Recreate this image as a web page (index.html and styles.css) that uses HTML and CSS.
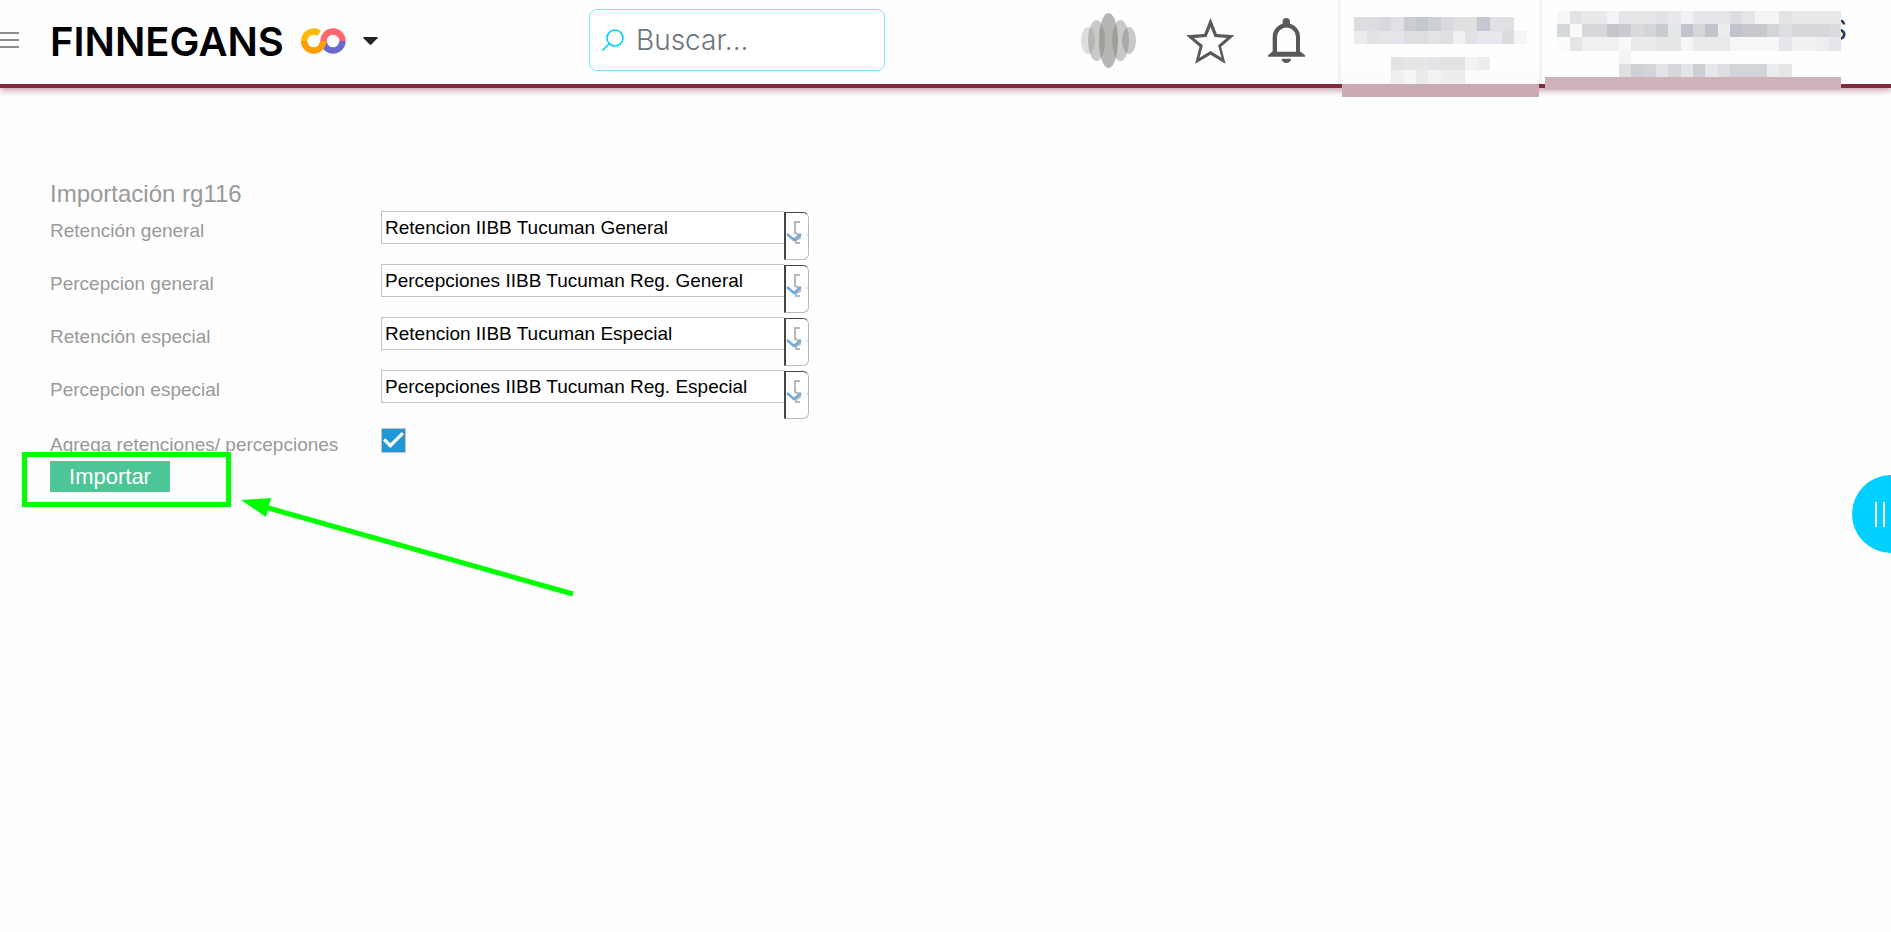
FILE: index.html
```html
<!DOCTYPE html>
<html lang="es">
<head>
    <meta charset="UTF-8">
    <meta name="viewport" content="width=device-width, initial-scale=1">
    <title>Importación rg116</title>
    <link rel="stylesheet" href="styles.css">
</head>
<body>

<header class="header">
    <button type="button" class="menu" aria-label="Menu"><span></span><span></span><span></span></button>

    <button type="button" class="brand">
        <span class="brand-name">FINNEGANS</span>
        <svg class="brand-logo" viewBox="903 84 135 78" fill="none" stroke-width="19">
            <path stroke="#6b69cd" d="M970.5 123a28.5 28.5 0 0 0 57 0"/>
            <path stroke="#ff6670" d="M970.5 123a28.5 28.5 0 0 1 57 0"/>
            <path stroke="#ffb900" d="M912.5 123a28.5 28.5 0 0 1 45-23"/>
            <path stroke="#ff9c00" d="M912.5 123a28.5 28.5 0 0 0 57 0"/>
        </svg>
        <svg class="brand-caret" viewBox="0 0 15 8"><path fill="#212529" d="M1 0h13q1 .5.5 1.2L8.300 7.500q-.8.700-1.600 0L.5 1.200Q0 .5 1 0z"/></svg>
    </button>

    <form class="search">
        <svg viewBox="0 0 22 22" fill="none" stroke="#00cfff" stroke-width="1.600">
            <circle cx="13" cy="9" r="8"/>
            <path d="M7.500 14.500L.5 21.500"/>
        </svg>
        <input type="text" placeholder="Buscar..." aria-label="Buscar">
    </form>

    <div class="tools">
        <button type="button" class="tool voice" aria-label="Asistente">
            <svg viewBox="0 0 55 55" fill="#7b7a77">
                <ellipse cx="7" cy="27.500" rx="7" ry="13.500" opacity=".25"/>
                <ellipse cx="48" cy="27.500" rx="7" ry="13.500" opacity=".4"/>
                <ellipse cx="15.500" cy="27.500" rx="8.500" ry="20.500" opacity=".4"/>
                <ellipse cx="39.500" cy="27.500" rx="8.500" ry="20.500" opacity=".4"/>
                <ellipse cx="27.500" cy="27.500" rx="9.500" ry="27.500" opacity=".55"/>
            </svg>
        </button>
        <button type="button" class="tool star" aria-label="Favoritos">
            <svg viewBox="378 52 146 138"><path fill="#595959" fill-rule="evenodd" d="M451 52L470 100L523 104L483 138L496 189L451 162L405 189L418 138L378 104L432 100ZM451 79L439 109L401 112L428 134L418 171L451 151L484 171L474 134L500 112L463 109Z"/></svg>
        </button>
        <button type="button" class="tool bell" aria-label="Notificaciones">
            <svg viewBox="624 58 111 135" fill="#595959">
                <path d="M668 80V69a11 11 0 0 1 22 0v11z"/>
                <path fill-rule="evenodd" d="M638 158V115a41 41 0 0 1 82 0v43l15 12v4H624v-4zM651 159h57V115a28.500 28.500 0 0 0-57 0z"/>
                <path d="M665 180h28a14 13 0 0 1-28 0z"/>
            </svg>
        </button>
    </div>

    <div class="user company">
        <svg width="197" height="97" viewBox="0 0 197 97" shape-rendering="crispEdges">
            <path fill="#fcfcfc" d="M0 70h197v14H0z"/>
            <path fill="#dcdde1" d="M12 17h25v14H12z"/>
            <path fill="#d8d9dc" d="M37 17h12v14H37z"/>
            <path fill="#e0e1e5" d="M49 17h13v14H49z"/>
            <path fill="#cbccd1" d="M62 17h12v14H62z"/>
            <path fill="#c5c7cf" d="M74 17h12v14H74z"/>
            <path fill="#cccfd4" d="M86 17h13v14H86z"/>
            <path fill="#d9dadd" d="M99 17h12v14H99z"/>
            <path fill="#dfe0e2" d="M111 17h24v14h-24z"/>
            <path fill="#c6c8d1" d="M135 17h13v14h-13z"/>
            <path fill="#e0e1e4" d="M148 17h24v14h-24z"/>
            <path fill="#ebecee" d="M12 31h13v13H12z"/>
            <path fill="#e1e2e6" d="M25 31h12v13H25z"/>
            <path fill="#e4e5e6" d="M37 31h12v13H37z"/>
            <path fill="#e4e5ea" d="M49 31h13v13H49z"/>
            <path fill="#dddee2" d="M62 31h24v13H62z"/>
            <path fill="#e2e3e4" d="M86 31h13v13H86z"/>
            <path fill="#dddfe3" d="M99 31h12v13H99z"/>
            <path fill="#eff0f2" d="M111 31h12v13h-12z"/>
            <path fill="#e2e3e7" d="M123 31h12v13h-12z"/>
            <path fill="#e7e8ed" d="M135 31h25v13h-25z"/>
            <path fill="#dcdce0" d="M160 31h12v13h-12z"/>
            <path fill="#f4f5f7" d="M172 31h13v13h-13z"/>
            <path fill="#e2e3e5" d="M49 57h13v13H49z"/>
            <path fill="#e5e6e8" d="M62 57h24v13H62z"/>
            <path fill="#e3e4e9" d="M86 57h13v13H86z"/>
            <path fill="#e2e3e4" d="M99 57h24v13H99z"/>
            <path fill="#f1f2f4" d="M123 57h12v13h-12z"/>
            <path fill="#ecedef" d="M135 57h13v13h-13z"/>
            <path fill="#efefef" d="M49 70h13v14H49z"/>
            <path fill="#f5f5f5" d="M62 70h12v14H62z"/>
            <path fill="#e9eaeb" d="M74 70h12v14H74z"/>
            <path fill="#f2f2f2" d="M86 70h13v14H86z"/>
            <path fill="#ededed" d="M99 70h24v14H99z"/>
            <path fill="#cbaab1" d="M0 84h197v13H0z"/>
        </svg>
    </div>

    <div class="user person">
        <span class="person-name">S</span>
        <svg width="296" height="90" viewBox="0 0 296 90" shape-rendering="crispEdges">
            <path fill="#f6f7f6" d="M12 11h13v13H12z"/>
            <path fill="#e1e2e6" d="M25 11h12v13H25z"/>
            <path fill="#e8e9ea" d="M37 11h25v13H37z"/>
            <path fill="#f3f4f7" d="M62 11h12v13H62z"/>
            <path fill="#e5e6e7" d="M74 11h37v13H74z"/>
            <path fill="#e1e2e5" d="M111 11h12v13h-12z"/>
            <path fill="#e7e8ea" d="M123 11h13v13h-13z"/>
            <path fill="#f1f2f5" d="M136 11h12v13h-12z"/>
            <path fill="#e5e6ea" d="M148 11h37v13h-37z"/>
            <path fill="#dddee2" d="M185 11h12v13h-12z"/>
            <path fill="#e5e6e8" d="M197 11h13v13h-13z"/>
            <path fill="#f3f5f4" d="M210 11h24v13h-24z"/>
            <path fill="#e2e3e4" d="M234 11h13v13h-13z"/>
            <path fill="#e8e9ea" d="M247 11h49v13h-49z"/>

            <path fill="#d5d9dc" d="M12 24h13v13H12z"/>
            <path fill="#fafafa" d="M25 24h12v13H25z"/>
            <path fill="#d7d8db" d="M37 24h25v13H37z"/>
            <path fill="#c4c6cc" d="M62 24h12v13H62z"/>
            <path fill="#cacbd0" d="M74 24h12v13H74z"/>
            <path fill="#d9dade" d="M86 24h13v13H86z"/>
            <path fill="#d4d5d9" d="M99 24h12v13H99z"/>
            <path fill="#c9cccf" d="M111 24h12v13h-12z"/>
            <path fill="#e6e7e9" d="M123 24h13v13h-13z"/>
            <path fill="#c1c3cd" d="M136 24h12v13h-12z"/>
            <path fill="#d6d7db" d="M148 24h12v13h-12z"/>
            <path fill="#c1c3cd" d="M160 24h13v13h-13z"/>
            <path fill="#ebecee" d="M173 24h12v13h-12z"/>
            <path fill="#c1c3cd" d="M185 24h12v13h-12z"/>
            <path fill="#c6c8cc" d="M197 24h25v13h-25z"/>
            <path fill="#d1d4d9" d="M222 24h12v13h-12z"/>
            <path fill="#dddee2" d="M234 24h13v13h-13z"/>
            <path fill="#d6d7da" d="M247 24h37v13h-37z"/>
            <path fill="#dbdce0" d="M284 24h12v13h-12z"/>

            <path fill="#fafcfb" d="M12 37h13v14H12z"/>
            <path fill="#e4e6e6" d="M25 37h12v14H25z"/>
            <path fill="#eff0f2" d="M37 37h37v14H37z"/>
            <path fill="#f7f9f7" d="M74 37h12v14H74z"/>
            <path fill="#eaebec" d="M86 37h25v14H86z"/>
            <path fill="#e6e8e8" d="M111 37h25v14h-25z"/>
            <path fill="#f5f7f5" d="M136 37h12v14h-12z"/>
            <path fill="#e8eaeb" d="M148 37h37v14h-37z"/>
            <path fill="#f6f7f7" d="M185 37h49v14h-49z"/>
            <path fill="#e6e7ea" d="M234 37h13v14h-13z"/>
            <path fill="#f1f1f2" d="M247 37h24v14h-24z"/>
            <path fill="#eeeef0" d="M271 37h13v14h-13z"/>
            <path fill="#e5e6ea" d="M284 37h12v14h-12z"/>

            <path fill="#f3f4f6" d="M74 51h12v13H74z"/>
            <path fill="#dfe0e4" d="M74 64h12v13H74z"/>
            <path fill="#cdd0d5" d="M86 64h13v13H86z"/>
            <path fill="#d2d4d9" d="M99 64h12v13H99z"/>
            <path fill="#e3e4e7" d="M111 64h12v13h-12z"/>
            <path fill="#d6d7da" d="M123 64h13v13h-13z"/>
            <path fill="#e3e4e8" d="M136 64h12v13h-12z"/>
            <path fill="#cccfd5" d="M148 64h12v13h-12z"/>
            <path fill="#e6e7ea" d="M160 64h13v13h-13z"/>
            <path fill="#dddee2" d="M173 64h12v13h-12z"/>
            <path fill="#d1d4d9" d="M185 64h37v13h-37z"/>
            <path fill="#ebecee" d="M222 64h12v13h-12z"/>
            <path fill="#e5e6e7" d="M234 64h13v13h-13z"/>
            <path fill="#cfb2ba" d="M0 77h296v13H0z"/>
        </svg>
    </div>
</header>

<!-- arrow and chevron shared by the combo buttons -->
<svg class="defs" aria-hidden="true">
    <symbol id="combo" viewBox="0 0 22 26">
        <path fill="none" stroke="#b8b8b8" stroke-width="2" d="M14 2H9v11l5 2v3l-4 2v3h4"/>
        <path fill="none" stroke="#74a9dc" stroke-width="2.500" d="M1 14l7 6 7-6"/>
        <path stroke="#a9cdf0" d="M21 14v2"/>
    </symbol>
</svg>

<main class="content">
    <h1>Importación rg116</h1>
    <form>
        <div class="row">
            <label for="retGeneral">Retención general</label>
            <div class="combo">
                <input type="text" id="retGeneral" value="Retencion IIBB Tucuman General">
                <button type="button" aria-label="Abrir lista"><svg><use href="#combo"/></svg></button>
            </div>
        </div>
        <div class="row">
            <label for="perGeneral">Percepcion general</label>
            <div class="combo">
                <input type="text" id="perGeneral" value="Percepciones IIBB Tucuman Reg. General">
                <button type="button" aria-label="Abrir lista"><svg><use href="#combo"/></svg></button>
            </div>
        </div>
        <div class="row">
            <label for="retEspecial">Retención especial</label>
            <div class="combo">
                <input type="text" id="retEspecial" value="Retencion IIBB Tucuman Especial">
                <button type="button" aria-label="Abrir lista"><svg><use href="#combo"/></svg></button>
            </div>
        </div>
        <div class="row">
            <label for="perEspecial">Percepcion especial</label>
            <div class="combo">
                <input type="text" id="perEspecial" value="Percepciones IIBB Tucuman Reg. Especial">
                <button type="button" aria-label="Abrir lista"><svg><use href="#combo"/></svg></button>
            </div>
        </div>
        <div class="row check-row">
            <label for="agrega">Agrega retenciones/ percepciones</label>
            <span class="check">
                <input type="checkbox" id="agrega" checked>
                <svg viewBox="0 0 24 24"><path fill="none" stroke="#fff" stroke-width="3" d="M3 11l6 6L21 5"/></svg>
            </span>
        </div>
        <div class="actions">
            <button type="button" class="import">Importar</button>
            <span class="highlight"></span>
            <svg class="arrow" viewBox="0 0 334 98" fill="#00ff00">
                <path d="M0 1L30 -1L25 18z"/>
                <path stroke="#00ff00" stroke-width="5" d="M24 8L332 95"/>
            </svg>
        </div>
    </form>
</main>

<button type="button" class="side-tab" aria-label="Panel"><span></span><span></span></button>

</body>
</html>
```
FILE: styles.css
```css
* {
    box-sizing: border-box;
}
body {
    margin: 0;
    min-height: 100vh;
    background-color: #fefefe;
    font-family: "Liberation Sans", Arial, Helvetica, sans-serif;
    font-size: 19px;
}
button {
    border: 0;
    padding: 0;
    background: none;
    font-family: inherit;
    cursor: pointer;
}
svg {
    display: block;
}
.defs {
    position: absolute;
    width: 0;
    height: 0;
}

/* top bar */
.header {
    display: flex;
    align-items: flex-start;
    height: 88px;
    padding-right: 46px;
    border-bottom: 4px solid #7f2c40;
    box-shadow: 0 3px 6px rgba(127, 44, 64, 0.4);
    background-color: #fefefe;
}
.menu {
    display: flex;
    flex: none;
    flex-direction: column;
    gap: 5px;
    width: 19px;
    padding-top: 32px;
}
.menu span {
    width: 100%;
    height: 2px;
    background-color: #8c8c8c;
}
.brand {
    display: flex;
    flex: none;
    align-items: center;
    height: 82px;
    margin-left: 31px;
}
.brand-name {
    width: 251px;
    color: #000;
    font-family: Inter, sans-serif;
    font-size: 40px;
    font-weight: 600;
    text-align: left;
}
.brand-logo {
    width: 45px;
    height: 26px;
}
.brand-caret {
    width: 15px;
    height: 8px;
    margin-left: 17px;
}
.search {
    display: flex;
    align-items: center;
    flex: 0 1 296px;
    min-width: 0;
    height: 62px;
    margin: 9px 20px 0 211px;
    padding-left: 12px;
    border: 1px solid #7fe3fb;
    border-radius: 8px;
    background-color: #fff;
}
.search svg {
    flex: none;
    width: 22px;
    height: 22px;
}
.search input {
    flex: 1;
    min-width: 0;
    margin-left: 12px;
    padding: 0;
    border: 0;
    outline: 0;
    background: none;
    font-family: Inter, sans-serif;
    font-size: 28px;
    font-weight: 300;
}
.search input::placeholder {
    color: #6c757d;
    opacity: 1;
}
.tools {
    display: flex;
    align-items: center;
    height: 81px;
    margin-left: auto;
    margin-right: 33px;
}
.voice svg {
    width: 55px;
    height: 55px;
}
.star {
    margin-left: 50px;
}
.star svg {
    width: 49px;
    height: 46px;
}
.bell {
    margin-left: 33px;
}
.bell svg {
    width: 37px;
    height: 45px;
}
.user {
    flex: none;
    position: relative;
    height: 84px;
    border-left: 3px solid #f4f4f5;
}
.company {
    padding-left: 1px;
}
.person {
    width: 306px;
    padding-left: 3px;
}
.person svg {
    position: relative;
}
.person-name {
    position: absolute;
    top: 12px;
    right: -2px;
    color: #2b3650;
    font-family: Inter, sans-serif;
    font-size: 28px;
    line-height: 36px;
}

/* import form */
.content {
    padding: 90px 50px 120px;
    color: #999;
}
h1 {
    margin: 0 0 2px;
    font-size: 24px;
    font-weight: normal;
    line-height: 31px;
}
.row {
    display: flex;
    align-items: flex-start;
    margin-bottom: 4px;
}
.row label {
    flex: none;
    width: 331px;
    padding-top: 9px;
    line-height: 22px;
}
.combo {
    display: flex;
    align-items: flex-start;
    flex: 0 1 428px;
    min-width: 0;
}
.combo input {
    flex: 1;
    min-width: 0;
    height: 33px;
    padding: 0 3px;
    border: 1px solid #c4c4c4;
    border-right: 0;
    background-color: #fff;
    color: #000;
    font-family: inherit;
    font-size: 19px;
}
.combo button {
    width: 25px;
    height: 48px;
    margin-top: 1px;
    padding-bottom: 6px;
    border: 1px solid #bbb;
    border-left: 2px solid #444;
    border-top: 1px solid #444;
    border-radius: 0 6px 6px 0;
    background-color: #fff;
}
.combo svg {
    width: 22px;
    height: 26px;
}
.check-row {
    height: 38px;
    padding-top: 5px;
    margin: 0;
}
.check-row label {
    padding-top: 6px;
}
.check {
    display: grid;
    width: 25px;
    height: 25px;
}
.check input,
.check svg {
    grid-area: 1 / 1;
    width: 25px;
    height: 25px;
    margin: 0;
}
.check input {
    appearance: none;
    border: 1px solid #c4c4c4;
}
.check input:checked {
    background-color: #2196d9;
}
.check svg {
    pointer-events: none;
}
.actions {
    position: relative;
}
.import {
    display: block;
    width: 120px;
    height: 31px;
    background-color: #4cc696;
    color: #fff;
    font-size: 22px;
}
.highlight {
    position: absolute;
    top: -9px;
    left: -28px;
    width: 209px;
    height: 55px;
    border: 5px solid #00ff00;
    pointer-events: none;
}
.arrow {
    position: absolute;
    top: 38px;
    left: 191px;
    width: 334px;
    height: 98px;
    overflow: visible;
}

/* side panel handle */
.side-tab {
    position: fixed;
    top: 475px;
    right: 0;
    display: flex;
    align-items: center;
    gap: 6px;
    width: 39px;
    height: 78px;
    padding-left: 23px;
    border-radius: 39px 0 0 39px;
    background-color: #00cfff;
}
.side-tab span {
    width: 2px;
    height: 25px;
    background-color: #fff;
}
```
